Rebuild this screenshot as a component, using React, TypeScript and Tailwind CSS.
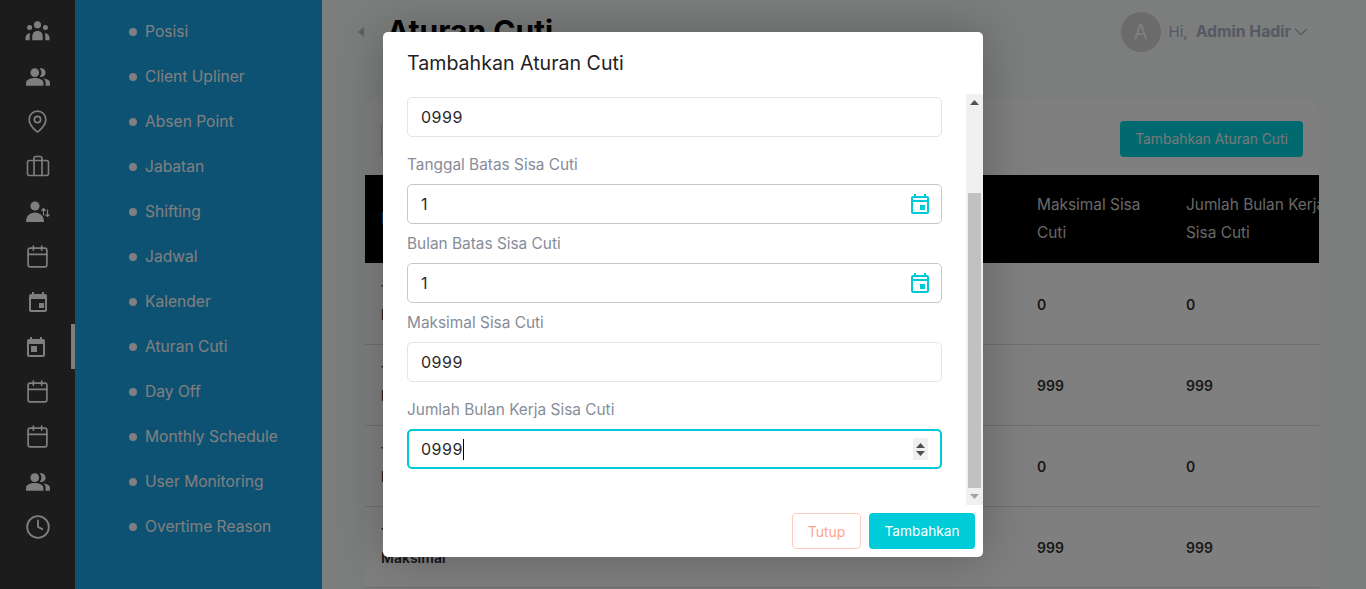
import { Calendar, ChevronDown, Clock, MapPin } from "lucide-react";
import { MdOutlineEvent, MdPeopleAlt } from "react-icons/md";

const menu = [
  "Posisi",
  "Client Upliner",
  "Absen Point",
  "Jabatan",
  "Shifting",
  "Jadwal",
  "Kalender",
  "Aturan Cuti",
  "Day Off",
  "Monthly Schedule",
  "User Monitoring",
  "Overtime Reason",
];

const rows = ["0", "999", "0", "999"];

function GroupsIcon() {
  return (
    <svg width="25" height="25" viewBox="0 0 24 24" fill="currentColor">
      <circle cx="12" cy="5.6" r="3.4" />
      <circle cx="4.4" cy="8.2" r="2.4" />
      <circle cx="19.6" cy="8.2" r="2.4" />
      <path d="M7 20.5v-4.2a5 5 0 0 1 10 0v4.2z" />
      <path d="M0.5 20.5v-2.6a4.4 4.4 0 0 1 4.6-4.3 8 8 0 0 0-.6 3v3.9z" />
      <path d="M23.5 20.5v-2.6a4.4 4.4 0 0 0-4.6-4.3 8 8 0 0 1 .6 3v3.9z" />
    </svg>
  );
}

function BriefcaseIcon() {
  return (
    <svg width="24" height="24" viewBox="0 0 24 24" fill="none" stroke="currentColor" strokeWidth="1.6">
      <rect x="1.5" y="5.5" width="21" height="15" rx="2" />
      <path d="M8 20.5V3.5a2 2 0 0 1 2-2h4a2 2 0 0 1 2 2v17" />
    </svg>
  );
}

function PersonSwapIcon() {
  return (
    <svg width="26" height="26" viewBox="0 0 26 26" fill="currentColor">
      <circle cx="10" cy="7" r="4.6" />
      <path d="M1 23c0-6 4-9.500 9-9.500s9 3.500 9 9.500z" />
      <path d="M18.500 16.500v-7M16.500 11.500l2-2 2 2M22.500 10.500v7M20.500 15.500l2 2 2-2" fill="none" stroke="currentColor" strokeWidth="1.200" />
    </svg>
  );
}

// calendar with a filled header, the square sits left on the open page
function EventIcon({ left }: { left?: boolean }) {
  return (
    <svg width="24" height="24" viewBox="0 0 24 24" fill="currentColor">
      <path d="M19 4h-1V2h-2v2H8V2H6v2H5c-1.100 0-2 .9-2 2v14c0 1.100.9 2 2 2h14c1.100 0 2-.9 2-2V6c0-1.100-.9-2-2-2zm0 16H5V9h14v11z" />
      <rect x={left ? 7 : 13} y={left ? 11 : 13} width={left ? 6 : 5} height={left ? 6 : 5} />
    </svg>
  );
}

function Arrow({ down, className }: { down?: boolean; className: string }) {
  return (
    <svg width="9" height="5" viewBox="0 0 9 5" className={className} fill="currentColor">
      <path d={down ? "M0 0h9L4.500 5z" : "M4.500 0L9 5H0z"} />
    </svg>
  );
}

function Field({
  label,
  value,
  tall,
  date,
  focused,
}: {
  label?: string;
  value: string;
  tall?: boolean;
  date?: boolean;
  focused?: boolean;
}) {
  const border = focused
    ? "border-2 border-[#00c9d8] pl-[12px] pr-[12px]"
    : date
      ? "border border-[#c8c8c8] pl-[13px] pr-[9px]"
      : "border border-[#e2e4e9] pl-[13px] pr-[10px]";
  return (
    <div>
      {label && (
        <div className={`${tall ? "mt-[16px]" : "mt-[8px]"} mb-[7px] h-6 text-[15.4px] leading-6 text-[#878c99]`}>{label}</div>
      )}
      <div className={`flex h-10 items-center rounded-[5px] text-[16px] tracking-[0.5px] text-[#2b2b2b] ${border}`}>
        <span>{value}</span>
        {focused && <span className="h-[21px] w-px bg-black" />}
        {date && <MdOutlineEvent size={24} className="-mt-px ml-auto text-[#00c9d8]" />}
        {focused && (
          <span className="ml-auto flex h-[22px] w-[15px] flex-col items-center justify-center gap-[3px] bg-[#f0f0f0] text-[#505050]">
            <Arrow className="" />
            <Arrow down className="" />
          </span>
        )}
      </div>
    </div>
  );
}

export default function App() {
  return (
    <div className="relative flex h-[589px] w-[1366px] overflow-hidden bg-[#f9fbfa] font-['Inter',sans-serif]">
      <div className="flex w-[75px] shrink-0 flex-col bg-[#383838] pt-[9px] text-white">
        <div className="flex h-[45px] items-center justify-center"><GroupsIcon /></div>
        <div className="flex h-[45px] items-center justify-center"><MdPeopleAlt size={26} /></div>
        <div className="flex h-[45px] items-center justify-center"><MapPin size={25} strokeWidth={1.6} /></div>
        <div className="flex h-[45px] items-center justify-center"><BriefcaseIcon /></div>
        <div className="flex h-[45px] items-center justify-center"><PersonSwapIcon /></div>
        <div className="flex h-[45px] items-center justify-center"><Calendar size={25} strokeWidth={1.6} /></div>
        <div className="flex h-[45px] items-center justify-center"><EventIcon /></div>
        <div className="flex h-[45px] items-center justify-center border-r-4 border-white"><EventIcon left /></div>
        <div className="flex h-[45px] items-center justify-center"><Calendar size={25} strokeWidth={1.6} /></div>
        <div className="flex h-[45px] items-center justify-center"><Calendar size={25} strokeWidth={1.6} /></div>
        <div className="flex h-[45px] items-center justify-center"><MdPeopleAlt size={26} /></div>
        <div className="flex h-[45px] items-center justify-center"><Clock size={26} strokeWidth={1.7} /></div>
      </div>

      <div className="w-[247px] shrink-0 bg-[#1aa4e6] pt-[9px] pl-[54px] text-white">
        {menu.map((item) => (
          <div key={item} className="flex h-[45px] items-center gap-2">
            <span className="h-2 w-2 rounded-full bg-white" />
            <span className="text-[15.6px]">{item}</span>
          </div>
        ))}
      </div>

      <div className="min-w-0 flex-1">
        <div className="flex h-[98px] pt-3">
          <div className="ml-[36px] mt-[15px] h-0 w-0 border-y-[5px] border-r-[6px] border-y-transparent border-r-[#b8c0c0]" />
          <h1 className="mt-px ml-[23px] text-[30px] leading-9 font-bold text-black">Aturan Cuti</h1>
          <div className="ml-auto mr-[54px] flex h-10 items-center text-[#aab2c6]">
            <div className="mr-2 flex h-10 w-10 items-center justify-center rounded-full bg-[#d6d6d6] text-[20px] text-white">A</div>
            <span className="mr-2 text-[15px]">Hi,</span>
            <span className="text-[15.800px] font-bold">Admin Hadir</span>
            <ChevronDown size={22} strokeWidth={1.2} className="-ml-px" />
          </div>
        </div>

        <div className="ml-[43px] w-[954px] overflow-hidden rounded-t-[16px] bg-white">
          <div className="flex h-[77px] items-start justify-between pt-[23px] pl-4 pr-4">
            <div className="h-[38px] w-[80px] rounded border border-[#cfcfcf]" />
            <button className="h-9 w-[183px] rounded bg-[#00d4e0] text-[13.800px] text-[#f0f0f0]">Tambahkan Aturan Cuti</button>
          </div>
          <div className="grid h-[88px] grid-cols-[656px_149px_149px] items-center bg-black text-[15.400px] leading-7 whitespace-nowrap text-[#d0d0d0]">
            <div className="pl-4 text-[#3b8ce0]">Nama</div>
            <div className="pl-4">Maksimal Sisa<br />Cuti</div>
            <div className="pl-4">Jumlah Bulan Kerja<br />Sisa Cuti</div>
          </div>
          <div className="pt-px">
            {rows.map((v, i) => (
              <div key={i} className="grid h-[81px] grid-cols-[656px_149px_149px] items-center border-b border-[#dcdcdc] pt-[2px] text-[14px] leading-6 font-semibold text-[#303030]">
                <div className="-mt-[4px] pl-4">Tanpa<br />Maksimal</div>
                <div className="pl-4">{v}</div>
                <div className="pl-4">{v}</div>
              </div>
            ))}
          </div>
        </div>
      </div>

      <div className="absolute inset-0 bg-black/50" />

      <div className="absolute top-[32px] left-[383px] flex h-[525px] w-[600px] flex-col rounded-[5px] bg-white shadow-[0_0_50px_rgba(0,0,0,0.25)]">
        <div className="flex h-[62px] shrink-0 items-center pt-[2px] pl-6 text-[19.600px] text-[#222]">Tambahkan Aturan Cuti</div>
        <div className="flex h-[411px] shrink-0">
          <div className="flex-1 pt-[3px] pl-6 pr-6">
            <Field value="0999" />
            <Field label="Tanggal Batas Sisa Cuti" value="1" tall date />
            <Field label="Bulan Batas Sisa Cuti" value="1" date />
            <Field label="Maksimal Sisa Cuti" value="0999" />
            <Field label="Jumlah Bulan Kerja Sisa Cuti" value="0999" tall focused />
          </div>
          <div className="flex w-[17px] flex-col items-center bg-[#f0f0f0]">
            <div className="flex h-[17px] items-center justify-center"><Arrow className="text-[#505050]" /></div>
            <div className="mt-[82px] h-[295px] w-[13px] bg-[#c1c1c1]" />
            <div className="flex h-[17px] items-center justify-center"><Arrow down className="text-[#a3a3a3]" /></div>
          </div>
        </div>
        <div className="flex justify-end gap-2 pt-[8px] pr-2">
          <button className="h-9 w-[69px] rounded border border-[#ffcbbb] text-[14px] text-[#ffa58c]">Tutup</button>
          <button className="h-9 w-[106px] rounded bg-[#00cbd9] text-[13.700px] text-white">Tambahkan</button>
        </div>
      </div>
    </div>
  );
}
